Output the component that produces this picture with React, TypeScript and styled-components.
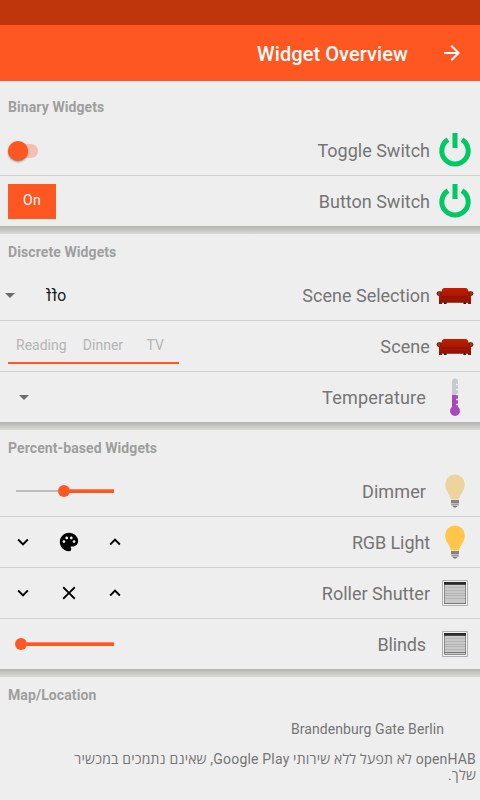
import React from 'react';
import styled, { createGlobalStyle } from 'styled-components';
import { MdArrowForward, MdClose, MdExpandLess, MdExpandMore, MdPalette } from 'react-icons/md';

const GlobalStyle = createGlobalStyle`
  * { box-sizing: border-box; }
  body { margin: 0; background: #eeeeee; overflow: hidden; }
`;

const Screen = styled.div`
  width: 480px;
  height: 800px;
  overflow: hidden;
  background: #eeeeee;
  font-family: Roboto, "Open Sans", sans-serif;
  color: #757575;
`;

const StatusBar = styled.div`
  height: 25px;
  background: #bf360c;
`;

const AppBar = styled.header`
  height: 56px;
  padding-right: 16px;
  display: flex;
  align-items: center;
  justify-content: flex-end;
  gap: 32px;
  background: #ff5722;
  color: #fff;
`;

const Title = styled.h1`
  margin: 1px 0 0;
  font-size: 20px;
  font-weight: 500;
  line-height: 24px;
  letter-spacing: 0.08px;
  white-space: nowrap;
`;

const Section = styled.section<{ $first?: boolean }>`
  padding-top: ${(p) => (p.$first ? 8 : 0)}px;
`;

const SectionTitle = styled.h2`
  margin: 0;
  height: 36px;
  padding: 10px 8px 0;
  font-size: 14px;
  line-height: 16px;
  font-weight: 700;
  letter-spacing: 0.09px;
  color: #9e9e9e;
`;

const SectionShadow = styled.div`
  height: 8px;
  background: linear-gradient(#b3b3b1, #dadad8);
`;

const Row = styled.div<{ $last?: boolean }>`
  height: ${(p) => (p.$last ? 50 : 51)}px;
  display: flex;
  align-items: center;
  border-bottom: ${(p) => (p.$last ? 'none' : '1px solid #d0d0d0')};
`;

const Control = styled.div<{ $left: number }>`
  flex: 1;
  display: flex;
  align-items: center;
  height: 50px;
  padding-left: ${(p) => p.$left}px;
`;

const Label = styled.span<{ $gap?: number; $tracking?: number }>`
  margin-right: ${(p) => p.$gap ?? 0}px;
  padding-top: 2px;
  font-size: 18px;
  line-height: 22px;
  letter-spacing: ${(p) => p.$tracking ?? 0}px;
  white-space: nowrap;
`;

const IconSlot = styled.div`
  width: 50px;
  height: 50px;
  display: flex;
  justify-content: center;
  align-items: center;
  svg { display: block; }
`;

const SwitchTrack = styled.div`
  display: flex;
  align-items: center;
  width: 30px;
  height: 14px;
  margin-top: 2px;
  border-radius: 7px;
  background: #f5c0af;
`;

const SwitchThumb = styled.div`
  width: 20px;
  height: 20px;
  flex: none;
  margin-left: -0.5px;
  margin-top: -1px;
  border-radius: 50%;
  background: #ff5722;
  box-shadow: 0 1px 2px rgba(0, 0, 0, 0.4);
`;

const OnButton = styled.button`
  width: 48px;
  height: 35px;
  padding: 0 0 2px;
  border: 0;
  background: #ff5722;
  color: #fff;
  font: 400 14px/16px Roboto, sans-serif;
  letter-spacing: 0.2px;
`;

const Caret = styled.i`
  width: 10px;
  height: 5px;
  border: 5px solid transparent;
  border-top-color: #6b6b6b;
  border-bottom: 0;
`;

const MirroredValue = styled.span`
  margin: 1px 0 0 31px;
  transform: scaleX(-1);
  font-size: 16px;
  line-height: 18px;
  color: #212121;
`;

const Options = styled.div`
  width: 171px;
  height: 33px;
  margin-top: 3px;
  display: flex;
  border-bottom: 2px solid #ff5722;
  font-size: 14px;
  line-height: 29px;
  color: #b5b5b5;
`;

const Option = styled.span<{ $width: number }>`
  width: ${(p) => p.$width}px;
  text-align: center;
`;

const Slider = styled.div<{ $width: number }>`
  width: ${(p) => p.$width}px;
  display: flex;
  align-items: center;
  margin-bottom: 1px;
`;

const Rail = styled.div<{ $width: number }>`
  width: ${(p) => p.$width}px;
  height: 2px;
  background: #bdbdbd;
`;

const Thumb = styled.div`
  width: 12px;
  height: 12px;
  border-radius: 50%;
  background: #ff5722;
`;

const ActiveRail = styled.div`
  flex: 1;
  height: 4px;
  margin-left: -1px;
  background: #ff5722;
  border-top: 1px solid #ff8058;
`;

const Actions = styled.div`
  display: flex;
  gap: 24px;
  color: #000;
`;

const Place = styled.p`
  margin: 8px 36px 0 0;
  font-size: 14px;
  line-height: 16px;
  letter-spacing: 0.08px;
  text-align: right;
`;

const Notice = styled.p`
  margin: 14px 4px 0 60px;
  direction: rtl;
  font-size: 14px;
  line-height: 16px;
  letter-spacing: 0.19px;
`;

const Power = () => (
  <svg width="34" height="36" viewBox="0 0 34 36">
    <path d="M10 7.700A13.200 13.200 0 1 0 24 7.700" fill="none" stroke="#00c864" strokeWidth="5" />
    <path d="M14.500 1h5v15h-5z" fill="#00c864" />
  </svg>
);

const Sofa = () => (
  <svg width="38" height="18" viewBox="0 0 38 18">
    <defs>
      <linearGradient id="sofa" x1="0" y1="0" x2="0" y2="1">
        <stop offset="0" stopColor="#c51c00" />
        <stop offset="1" stopColor="#8d1000" />
      </linearGradient>
    </defs>
    <path d="M8 16h2.500v2H8zM27.500 16H30v2h-2.500z" fill="#111" />
    <path d="M8.500 2h21q2.500 0 3 3.500h2.500V18h-3v-1.200H6V18H3V5.500h2.500q.5-3.500 3-3.500z" fill="url(#sofa)" />
    <path d="M6 11h26" stroke="#7d1000" strokeWidth=".8" />
    <circle cx="3" cy="7.600" r="2.400" fill="#8d1400" />
    <circle cx="35" cy="7.600" r="2.400" fill="#8d1400" />
    <circle cx="3" cy="7.600" r="1.300" fill="#6e5141" />
    <circle cx="35" cy="7.600" r="1.300" fill="#6e5141" />
  </svg>
);

const Thermometer = () => (
  <svg width="12" height="38" viewBox="0 0 12 38">
    <path d="M3 18V3.500a3 3 0 0 1 6 0V18z" fill="#c4cbce" />
    <path d="M3 17h6v12a5 5 0 1 1-6 0z" fill="#ab47bc" />
    <path d="M7 6.500h3M7 11.500h3M7 16.500h3M7 21.500h3M7 26.500h3" stroke="#eee" strokeWidth="1.300" />
  </svg>
);

const Bulb = ({ color }: { color: string }) => (
  <svg width="20" height="34" viewBox="0 0 20 34">
    <path d="M6 25.500C5 20 0.200 17 0.200 10.300a9.800 9.800 0 0 1 19.600 0C19.800 17 15 20 14 25.500z" fill={color} />
    <path d="M6 26h8v3.500H6zM6.300 30.300h7.400v1.200H6.300z" fill="#858585" />
    <path d="M7.500 32h5l-1.500 1.500H9z" fill="#777" />
  </svg>
);

const Shutter = ({ open }: { open?: boolean }) => (
  <svg width="26" height="26" viewBox="0 0 26 26">
    <path d="M.5.5h25v25H.5z" fill="#f2f2f2" stroke="#b0b0b0" />
    <path d="M2.500 2.500h21v21h-21z" fill="#c9c9c9" stroke="#8a8a8a" />
    <path d="M3 7.500h20M3 10.500h20M3 13.500h20M3 15.500h20M3 18.500h20" stroke="#b4b4b4" />
    <path d="M2 2h22v2.800H2z" fill="#2b2b2b" />
    <path d={open ? 'M2 21.500h22' : 'M2 23.500h22'} stroke="#777" />
  </svg>
);

interface WidgetRowProps {
  label: string;
  icon: React.ReactNode;
  left?: number;
  gap?: number;
  tracking?: number;
  last?: boolean;
  children: React.ReactNode;
}

const WidgetRow = ({ label, icon, left = 8, gap, tracking, last, children }: WidgetRowProps) => (
  <Row $last={last}>
    <Control $left={left}>{children}</Control>
    <Label $gap={gap} $tracking={tracking}>{label}</Label>
    <IconSlot>{icon}</IconSlot>
  </Row>
);

export default function App() {
  return (
    <>
      <GlobalStyle />
      <Screen>
        <StatusBar />
        <AppBar>
          <Title>Widget Overview</Title>
          <MdArrowForward size={24} />
        </AppBar>
        <Section $first>
          <SectionTitle>Binary Widgets</SectionTitle>
          <WidgetRow label="Toggle Switch" icon={<Power />}>
            <SwitchTrack><SwitchThumb /></SwitchTrack>
          </WidgetRow>
          <WidgetRow label="Button Switch" icon={<Power />} last>
            <OnButton>On</OnButton>
          </WidgetRow>
          <SectionShadow />
        </Section>
        <Section>
          <SectionTitle>Discrete Widgets</SectionTitle>
          <WidgetRow label="Scene Selection" icon={<Sofa />} left={5}>
            <Caret />
            <MirroredValue>off</MirroredValue>
          </WidgetRow>
          <WidgetRow label="Scene" icon={<Sofa />} tracking={0.1}>
            <Options>
              <Option $width={67}>Reading</Option>
              <Option $width={57}>Dinner</Option>
              <Option $width={48}>TV</Option>
            </Options>
          </WidgetRow>
          <WidgetRow label="Temperature" icon={<Thermometer />} left={19} gap={4} tracking={0.2} last>
            <Caret />
          </WidgetRow>
          <SectionShadow />
        </Section>
        <Section>
          <SectionTitle>Percent-based Widgets</SectionTitle>
          <WidgetRow label="Dimmer" icon={<Bulb color="#edd49c" />} left={16} gap={4} tracking={0.1}>
            <Slider $width={98}><Rail $width={42} /><Thumb /><ActiveRail /></Slider>
          </WidgetRow>
          <WidgetRow label="RGB Light" icon={<Bulb color="#ffc64a" />} left={12} tracking={-0.1}>
            <Actions>
              <MdExpandMore size={22} />
              <MdPalette size={22} />
              <MdExpandLess size={22} />
            </Actions>
          </WidgetRow>
          <WidgetRow label="Roller Shutter" icon={<Shutter />} left={12}>
            <Actions>
              <MdExpandMore size={22} />
              <MdClose size={22} />
              <MdExpandLess size={22} />
            </Actions>
          </WidgetRow>
          <WidgetRow label="Blinds" icon={<Shutter open />} left={15} gap={4} tracking={-0.15} last>
            <Slider $width={99}><Thumb /><ActiveRail /></Slider>
          </WidgetRow>
          <SectionShadow />
        </Section>
        <Section>
          <SectionTitle>Map/Location</SectionTitle>
          <Place>Brandenburg Gate Berlin</Place>
          <Notice>openHAB לא תפעל ללא שירותי Google Play, שאינם נתמכים במכשיר שלך.</Notice>
        </Section>
      </Screen>
    </>
  );
}
